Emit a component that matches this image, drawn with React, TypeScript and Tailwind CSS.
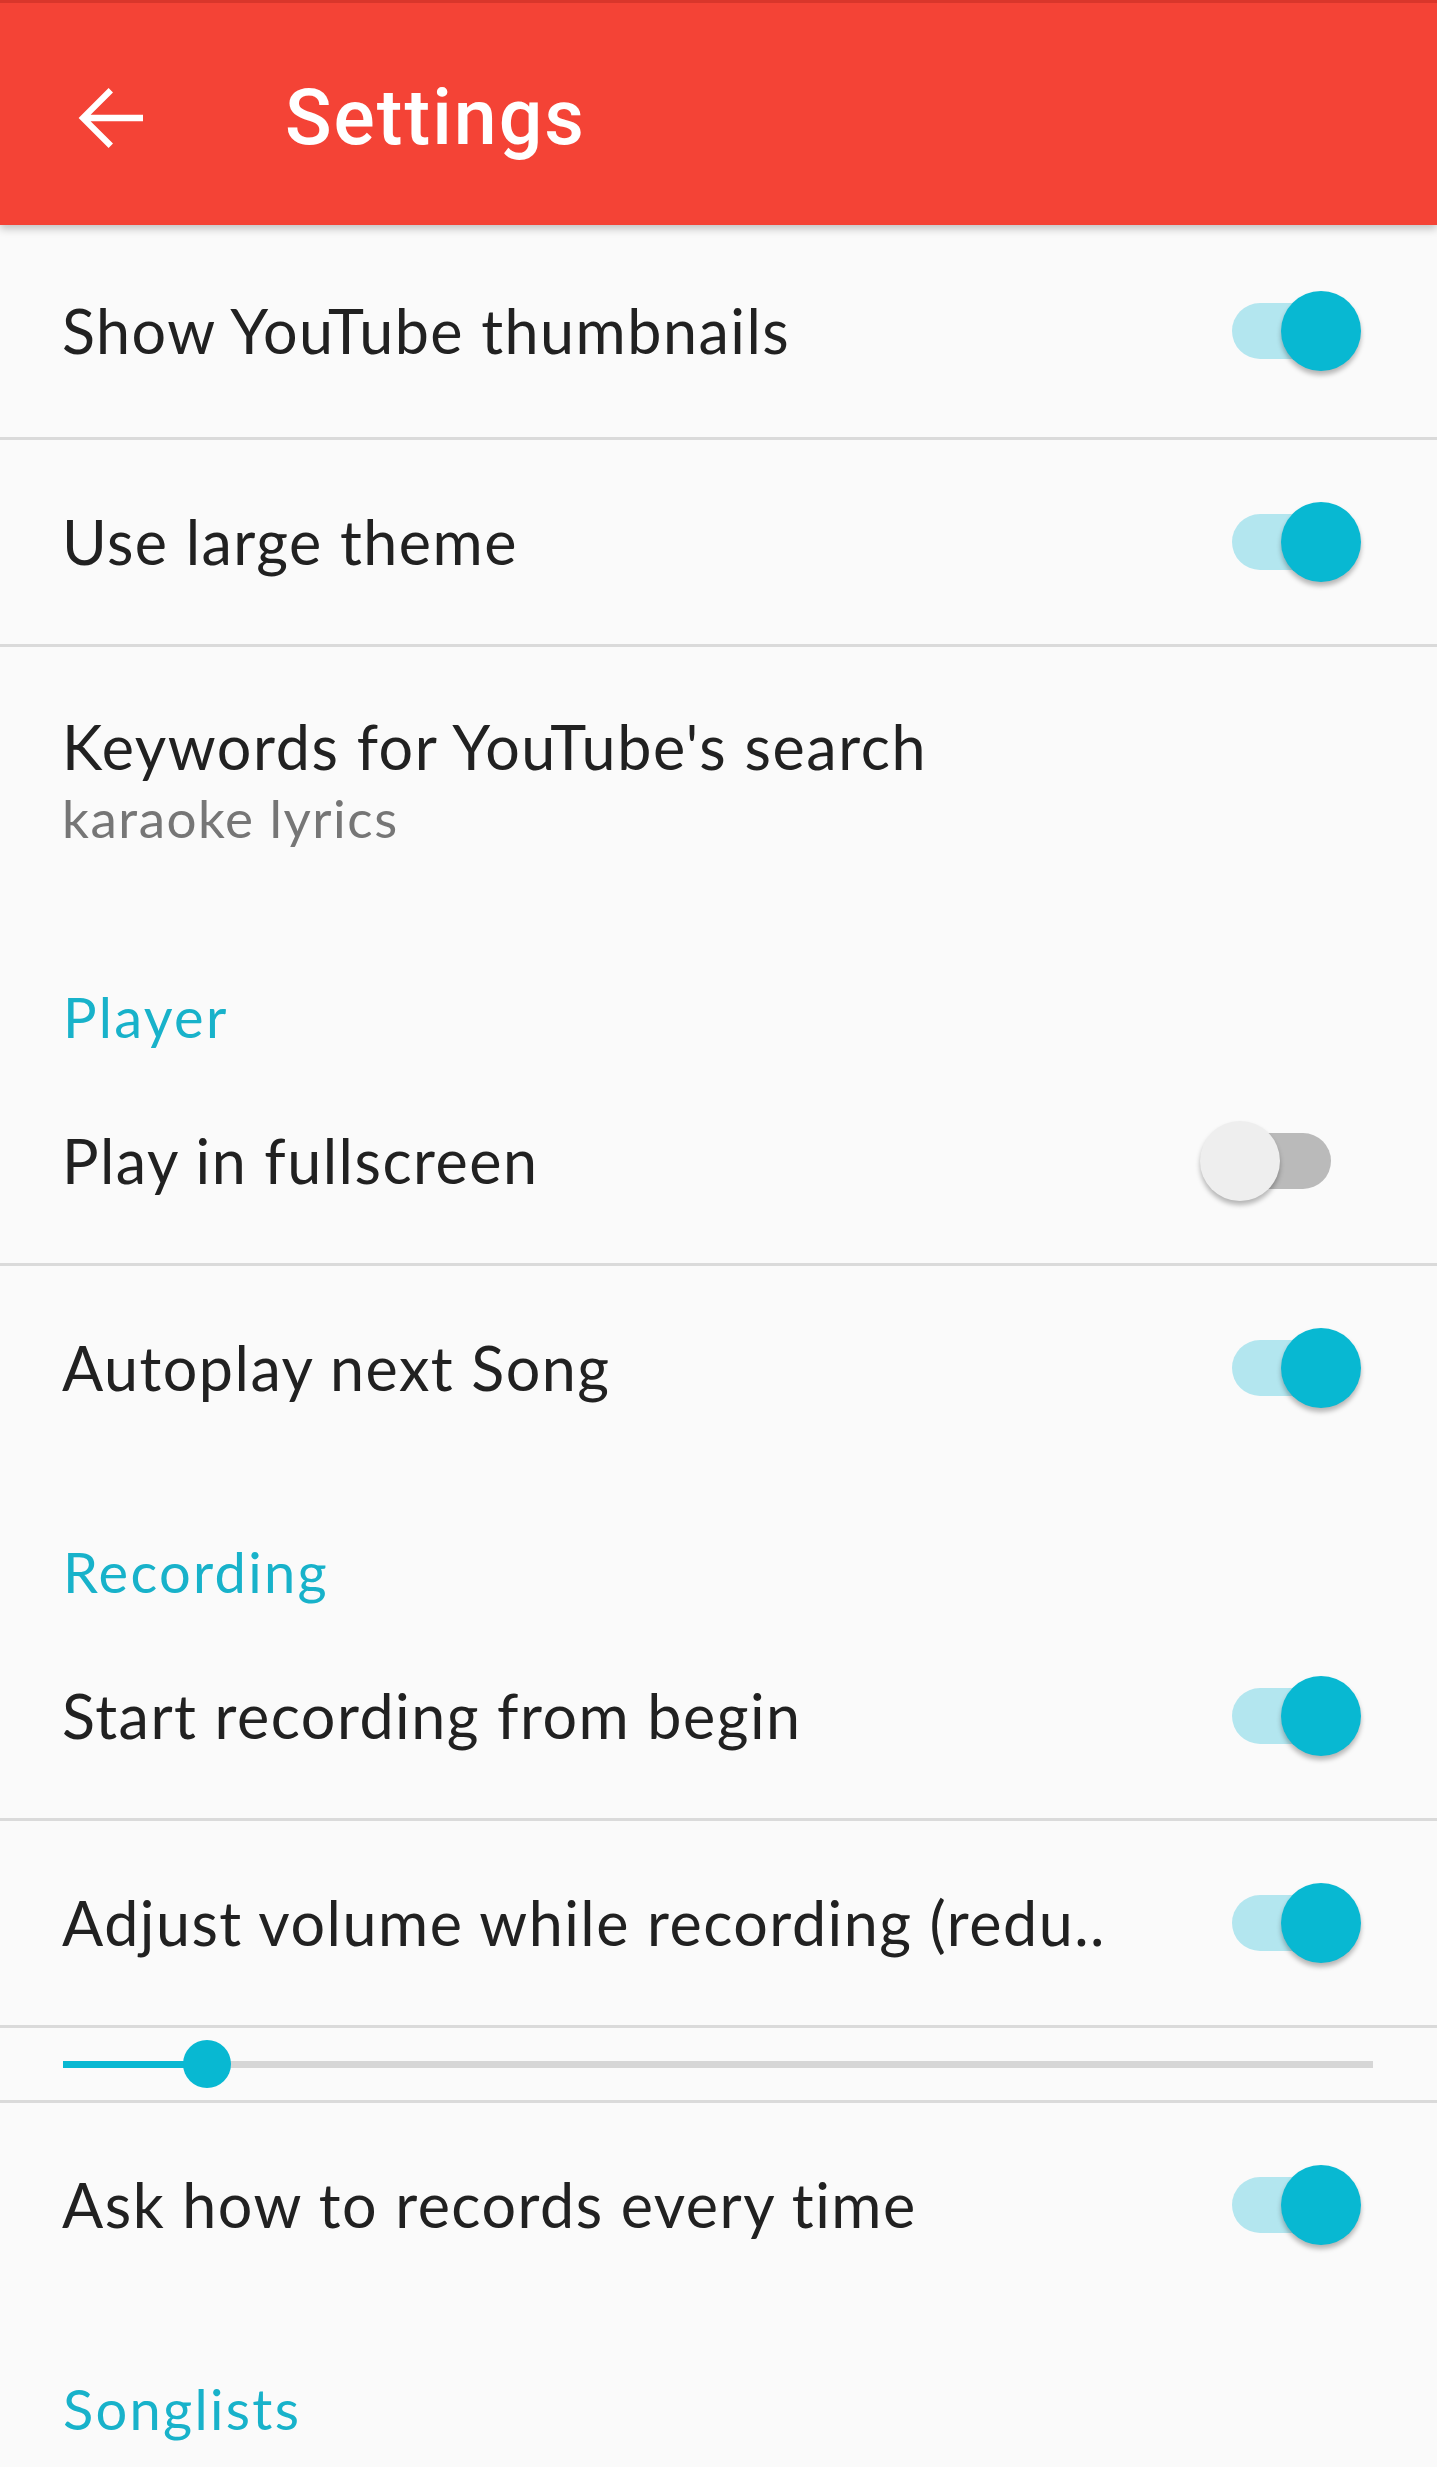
import React from "react";

const body = { fontFamily: 'Lato, "Liberation Sans", sans-serif' };

function Toggle({ on }: { on: boolean }) {
    return (
        <div
            className={`relative w-[99px] h-[56px] rounded-full ${on ? "bg-[#b3e6ef]" : "bg-[#bababa]"}`}
        >
            <div
                className={
                    on
                        ? "absolute top-1/2 -translate-y-1/2 left-[49px] w-[80px] h-[80px] rounded-full bg-[#08b8d2] shadow-[0_4px_5px_rgba(0,0,0,0.28)]"
                        : "absolute top-1/2 -translate-y-1/2 left-[-32px] w-[80px] h-[80px] rounded-full bg-[#eeeeee] shadow-[0_4px_5px_rgba(0,0,0,0.28)]"
                }
            />
        </div>
    );
}

function SwitchRow({ label, on, h = "h-[204px]" }: { label: string; on: boolean; h?: string }) {
    return (
        <div className={`${h} flex items-center justify-between pl-[62px] pr-[106px]`}>
            <span className="text-[61px] tracking-[1.5px] text-[#212121] whitespace-nowrap">{label}</span>
            <Toggle on={on} />
        </div>
    );
}

function Divider() {
    return <div className="h-[3px] bg-[#dadada]" />;
}

function Category({ title }: { title: string }) {
    return (
        <div className="h-[144px] flex flex-col justify-end pl-[63px]">
            <span className="text-[56px] tracking-[2.3px] text-[#18b2ca]">{title}</span>
        </div>
    );
}

export default function App() {
    return (
        <div className="w-[1437px] min-h-[2467px] bg-[#fafafa] overflow-hidden" style={body}>
            {/* Toolbar */}
            <header className="relative z-10 h-[225px] bg-[#f44336] border-t-[3px] border-[#d9362b] flex items-center shadow-[0_4px_8px_rgba(0,0,0,0.22)]">
                <div className="ml-[63px] pt-2">
                    <svg width="96" height="96" viewBox="0 0 24 24" fill="#ffffff">
                        <path d="M20 11.2H6.9l5.6-5.6-1.1-1.1L3.9 12l7.5 7.5 1.1-1.1-5.6-5.6H20v-1.6z" />
                    </svg>
                </div>
                <h1
                    className="ml-[126px] pt-[10px] text-[77px] tracking-[2px] font-medium text-white"
                    style={{ fontFamily: 'Roboto, "Liberation Sans", sans-serif' }}
                >
                    Settings
                </h1>
            </header>

            <SwitchRow label="Show YouTube thumbnails" on h="h-[212px]" />
            <Divider />
            <SwitchRow label="Use large theme" on />
            <Divider />

            {/* Keywords */}
            <div className="h-[268px] pl-[62px] pt-[54px] flex flex-col">
                <span className="text-[61px] tracking-[1.6px] text-[#212121]">Keywords for YouTube&apos;s search</span>
                <span className="mt-[-15px] text-[53px] tracking-[1.5px] text-[#767676]">karaoke lyrics</span>
            </div>

            <Category title="Player" />
            <SwitchRow label="Play in fullscreen" on={false} />
            <Divider />
            <SwitchRow label="Autoplay next Song" on />

            <Category title="Recording" />
            <SwitchRow label="Start recording from begin" on />
            <Divider />
            <SwitchRow label="Adjust volume while recording (redu.." on />
            <Divider />

            {/* Volume slider */}
            <div className="h-[72px] flex items-center pl-[63px] pr-[64px]">
                <div className="relative flex-1 h-[7px] bg-[#d6d6d6]">
                    <div className="absolute left-0 top-0 h-full w-[144px] bg-[#08b8d2]" />
                    <div className="absolute left-[120px] top-1/2 -translate-y-1/2 w-[48px] h-[48px] rounded-full bg-[#08b8d2]" />
                </div>
            </div>
            <Divider />

            <SwitchRow label="Ask how to records every time" on />
            <Category title="Songlists" />
        </div>
    );
}
